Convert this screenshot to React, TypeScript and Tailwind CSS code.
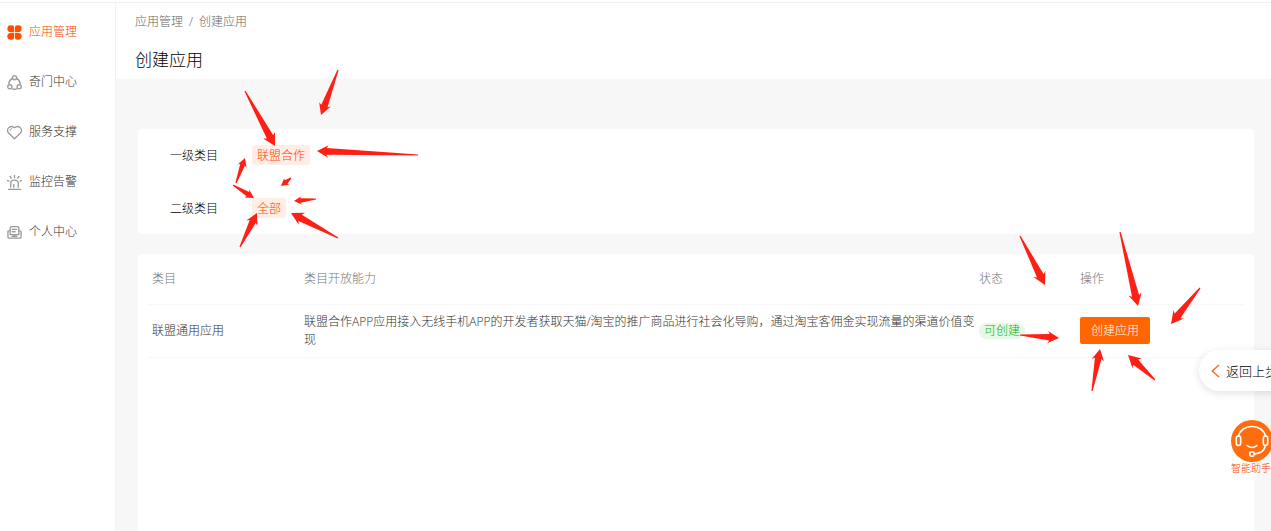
import type { ReactNode } from 'react';
import clsx from 'clsx';

const line = {
  fill: 'none',
  stroke: '#999',
  strokeWidth: 1.4,
  strokeLinecap: 'round',
  strokeLinejoin: 'round',
} as const;

const menu: { label: string; icon: ReactNode }[] = [
  {
    label: '应用管理',
    icon: (
      <g fill="#ff5000">
        <path d="M4 .3h1.2Q7.6.3 7.6 2.7v4.9H4A3.65 3.65 0 0 1 4 .3Z" />
        <path d="M12 .3h-1.2Q8.4.3 8.4 2.7v4.9H12A3.65 3.65 0 0 0 12 .3Z" />
        <path d="M4 15.7h1.2q2.4 0 2.4-2.4V8.4H4a3.65 3.65 0 0 0 0 7.3Z" />
        <path d="M12 15.7h-1.2q-2.4 0-2.4-2.4V8.4H12a3.65 3.65 0 0 1 0 7.3Z" />
      </g>
    ),
  },
  {
    label: '奇门中心',
    icon: (
      <g {...line}>
        <circle cx="8" cy="2.9" r="2.2" />
        <circle cx="3" cy="12.6" r="2.2" />
        <circle cx="13" cy="12.6" r="2.2" />
        <path d="M5.4 3.8A6.4 6.4 0 0 0 2 9.4M10.6 3.8A6.4 6.4 0 0 1 14 9.4M5.8 14.9q2.2.9 4.4 0" />
      </g>
    ),
  },
  {
    label: '服务支撑',
    icon: (
      <g {...line}>
        <path d="M8 14.6 1.9 8.9A4.2 4.2 0 0 1 1.9 2.8Q4.8.2 8 3Q11.2.2 14.1 2.8A4.2 4.2 0 0 1 14.1 8.9Z" />
        <path d="M3.4 5.6Q3.6 4 5 3.7" strokeWidth="1" />
      </g>
    ),
  },
  {
    label: '监控告警',
    icon: (
      <g {...line}>
        <path d="M4 13V8.7q0-3.3 4-3.3t4 3.3V13M7.2 10v3M1.5 15.3h13" />
        <path d="M8 .6v2M3.3 1.6l1.2 1.6M12.7 1.6l-1.2 1.6M.5 6.1l1.5.4M15.5 6.1l-1.5.4" />
      </g>
    ),
  },
  {
    label: '个人中心',
    icon: (
      <g {...line}>
        <path d="M3.4 10.3V3.2q0-1.5 1.5-1.5h6.2q1.5 0 1.5 1.5v7.1Z" />
        <path d="M5.7 4.7h4.6M5.7 7.2h3" />
        <path d="M3.2 6.2H2q-1 0-1 1v5.5q0 1.3 1.3 1.3h11.4q1.3 0 1.3-1.3V7.2q0-1-1-1h-1.2M8 10.5V12M5.5 12h5" />
      </g>
    ),
  },
];

const filters = [
  { label: '一级类目', value: '联盟合作' },
  { label: '二级类目', value: '全部' },
];

const rows = [
  {
    name: '联盟通用应用',
    desc: '联盟合作APP应用接入无线手机APP的开发者获取天猫/淘宝的推广商品进行社会化导购，通过淘宝客佣金实现流量的渠道价值变现',
    status: '可创建',
  },
];

// [tail x, tail y, tip x, tip y, head size]
const arrows = [
  [245, 91, 275, 146, 13],
  [338, 70, 321, 115, 12],
  [418, 155, 317, 151, 12],
  [236, 183, 245, 158, 9],
  [233, 185, 254, 198, 9],
  [291, 178, 281, 186, 8],
  [316, 199, 294, 201, 8],
  [240, 247, 257, 213, 12],
  [338, 238, 291, 213, 13],
  [1020, 236, 1045, 285, 13],
  [1120, 232, 1138, 306, 13],
  [1200, 288, 1171, 324, 13],
  [1020, 335, 1059, 338, 12],
  [1092, 391, 1100, 349, 12],
  [1155, 380, 1128, 355, 13],
];

function arrowPoints([x1, y1, x2, y2, size]: number[]) {
  const len = Math.hypot(x2 - x1, y2 - y1);
  const ux = (x2 - x1) / len;
  const uy = (y2 - y1) / len;
  // a = distance back from the tip, b = distance to the side
  const at = (a: number, b: number) => `${x2 - ux * a - uy * b},${y2 - uy * a + ux * b}`;
  return [
    at(0, 0),
    at(size * 0.95, size * 0.52),
    at(size * 0.8, size * 0.28),
    at(len, 0.6),
    at(len, -0.6),
    at(size * 0.8, -size * 0.28),
    at(size * 0.95, -size * 0.52),
  ].join(' ');
}

function Arrows() {
  return (
    <svg className="absolute left-0 top-0 pointer-events-none" width="1271" height="531" aria-hidden="true">
      {arrows.map((a, i) => (
        <polygon key={i} points={arrowPoints(a)} fill="#ff2015" />
      ))}
    </svg>
  );
}

function Sidebar() {
  return (
    <nav className="w-[116px] shrink-0 border-r border-[#f2f2f2] bg-white pt-1">
      {menu.map((item, i) => (
        <a
          key={item.label}
          href="#"
          className={clsx('flex h-[50px] items-center gap-[7px] pl-[7px]', i === 0 ? 'text-[#ff4400]' : 'text-[#333]')}
        >
          <svg className="h-[15px] w-[15px]" viewBox="0 0 16 16">{item.icon}</svg>
          {item.label}
        </a>
      ))}
    </nav>
  );
}

function FilterCard() {
  return (
    <section className="flex flex-col gap-[33px] rounded bg-white py-4 pl-8">
      {filters.map((f) => (
        <div key={f.label} className="flex h-5 items-center">
          <span className="w-[82px] pt-px text-black">{f.label}</span>
          <button className="h-5 rounded-[3px] bg-[#ffede6] px-[5px] pt-px text-[#ff4400]">{f.value}</button>
        </div>
      ))}
    </section>
  );
}

function AbilityTable() {
  return (
    <section className="flex-1 rounded-t bg-white px-[10px]">
      <table className="w-full table-fixed border-collapse text-left">
        <colgroup>
          <col className="w-[152px]" />
          <col />
          <col className="w-[98px]" />
          <col className="w-[168px]" />
        </colgroup>
        <thead>
          <tr className="h-[50px] border-b border-[#f7f7f7] text-[#777]">
            <th className="px-1 pt-px font-light">类目</th>
            <th className="pl-1 pt-px font-light">类目开放能力</th>
            <th className="pl-px pt-px font-light">状态</th>
            <th className="px-1 pt-px font-light">操作</th>
          </tr>
        </thead>
        <tbody>
          {rows.map((r) => (
            <tr key={r.name} className="h-[53px] border-b border-[#f7f7f7] text-[#333]">
              <td className="px-1">{r.name}</td>
              <td className="pl-1">{r.desc}</td>
              <td className="pl-px">
                <span className="inline-block rounded-full bg-[#e6f8e6] px-[5px] leading-4 text-[#0db30d]">{r.status}</span>
              </td>
              <td className="px-1">
                <button className="h-[27px] w-[70px] rounded-[2px] bg-[#ff6600] text-white">创建应用</button>
              </td>
            </tr>
          ))}
        </tbody>
      </table>
    </section>
  );
}

function FloatingTools() {
  return (
    <>
      <button className="absolute -right-4 top-[350px] flex h-[41px] w-[88px] items-center gap-[6px] whitespace-nowrap rounded-l-full bg-white pl-3 text-[13px] text-black shadow-[0_2px_8px_rgba(0,0,0,0.12)]">
        <svg className="h-[14px] w-[9px] shrink-0" viewBox="0 0 9 14" fill="none" stroke="#ff6426" strokeWidth="1.4">
          <path d="M8 1 1.2 7 8 13" />
        </svg>
        返回上步
      </button>
      <button className="absolute -right-[2px] top-[420px] flex w-[42px] flex-col items-start whitespace-nowrap text-[10px] leading-3 text-[#ff4400]">
        <svg className="h-[42px] w-[42px]" viewBox="0 0 42 42" fill="none" stroke="#fff" strokeWidth="1.6" strokeLinecap="round">
          <circle cx="21" cy="21" r="21" fill="#ff6d10" stroke="none" />
          <path d="M7.5 16C9 10 14.5 6.5 21 6.5S33 10 34.5 16" />
          <rect x="5.3" y="16" width="4.4" height="9.5" rx="2.2" />
          <rect x="32.3" y="16" width="4.4" height="9.5" rx="2.2" />
          <path d="M34.5 25.5Q33 33.3 23.3 34" />
          <circle cx="21" cy="34" r="2.3" />
          <path d="M16 25.5q5 4 10 0" />
        </svg>
        智能助手
      </button>
    </>
  );
}

export default function App() {
  return (
    <div className="relative flex min-h-screen flex-col overflow-hidden bg-white font-['Open_Sans','Noto_Sans_CJK_SC',sans-serif] text-xs font-light leading-[18px]">
      <div className="h-[3px] border-b border-[#f0f0f0]" />
      <div className="flex flex-1">
        <Sidebar />
        <main className="flex min-w-0 flex-1 flex-col bg-[#f7f7f7]">
          <header className="h-[76px] bg-white px-[19px] pt-[10px]">
            <div className="flex gap-[6px] text-[#666]">
              <a href="#">应用管理</a>
              <span>/</span>
              <a href="#">创建应用</a>
            </div>
            <h1 className="mt-[17px] text-[17px] leading-6 text-black">创建应用</h1>
          </header>
          <div className="flex flex-1 flex-col gap-5 pl-[22px] pr-[17px] pt-[50px]">
            <FilterCard />
            <AbilityTable />
          </div>
        </main>
      </div>
      <FloatingTools />
      <Arrows />
    </div>
  );
}
